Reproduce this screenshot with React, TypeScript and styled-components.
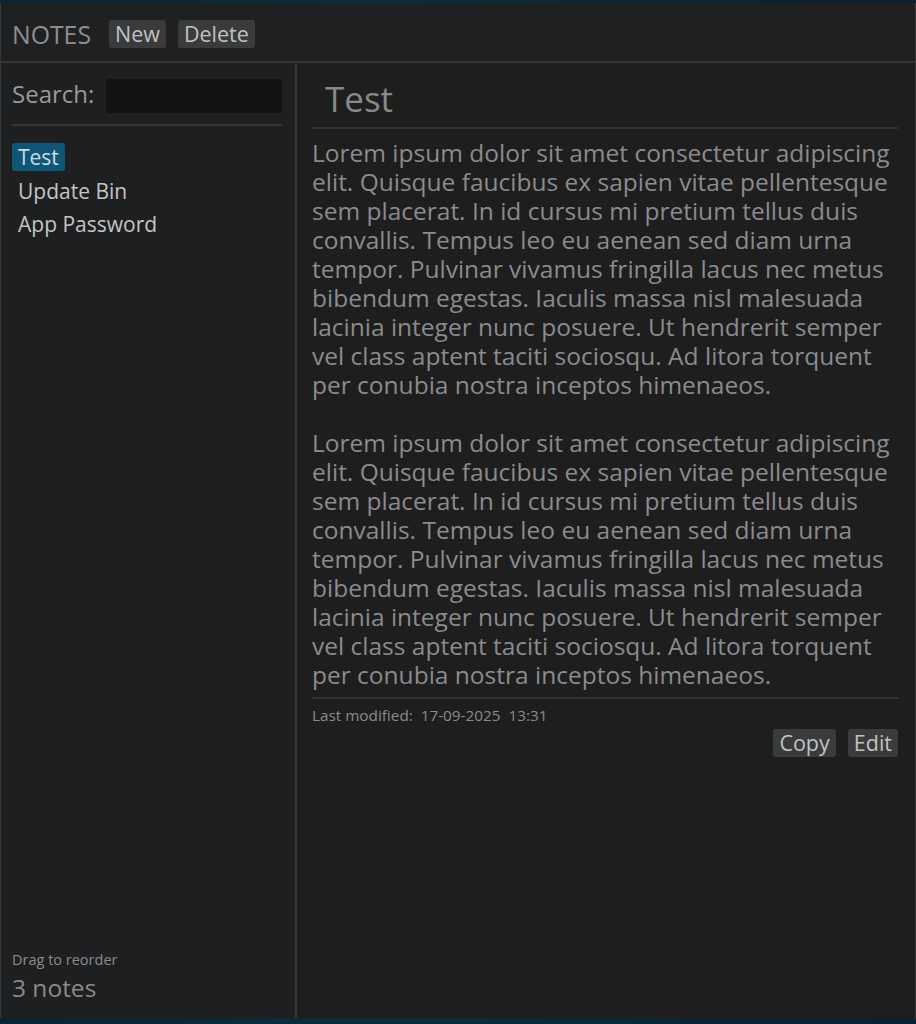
import React from "react";
import styled, { createGlobalStyle } from "styled-components";

const GlobalStyle = createGlobalStyle`
  html, body { margin: 0; padding: 0; }
  body {
    background: #0a2232;
    font-family: "Open Sans", "Noto Sans", sans-serif;
    overflow: hidden;
  }
`;

const Screen = styled.div`
  height: 1024px;
  display: flex;
  flex-direction: column;
  padding: 3px 0 6px;
  box-sizing: border-box;
  background: linear-gradient(90deg, #0b2433 0%, #0d2c3e 40%, #0a2130 100%);
`;

const Window = styled.div`
  flex: 1;
  display: flex;
  flex-direction: column;
  background: #1e1f20;
  border-left: 1px solid #38393a;
  border-right: 1px solid #38393a;
  min-height: 0;
`;

const Header = styled.header`
  height: 60px;
  box-sizing: border-box;
  display: flex;
  align-items: center;
  gap: 12px;
  padding: 4px 0 0 11px;
  border-bottom: 2px solid #343536;
  background: #1f2022;
`;

const AppTitle = styled.div`
  font-size: 24.8px;
  color: #8e8e8e;
  margin-right: 6px;
  line-height: 1;
`;

const Button = styled.button`
  height: 28px;
  padding: 0 6px;
  border: none;
  border-radius: 3px;
  background: #3a3b3c;
  color: #c2c2c2;
  font-family: inherit;
  font-size: 21.5px;
  line-height: 28px;
  cursor: pointer;
`;

const Body = styled.div`
  flex: 1;
  display: flex;
  min-height: 0;
`;

const Sidebar = styled.aside`
  width: 296px;
  flex-shrink: 0;
  box-sizing: border-box;
  border-right: 2px solid #343536;
  padding: 16px 13px 14px 11px;
  display: flex;
  flex-direction: column;
  background: #1e1f20;
`;

const SearchRow = styled.div`
  display: flex;
  align-items: flex-start;
  gap: 12px;
  padding-bottom: 11px;
  border-bottom: 2px solid #343536;
`;

const SearchLabel = styled.label`
  font-size: 24px;
  color: #9a9a9a;
  line-height: 29px;
`;

const SearchInput = styled.input`
  flex: 1;
  min-width: 0;
  height: 34px;
  box-sizing: border-box;
  border: none;
  border-radius: 3px;
  background: #111213;
  color: #ccc;
  outline: none;
`;

const NoteList = styled.ul`
  list-style: none;
  margin: 17px 0 0;
  padding: 0;
  display: flex;
  flex-direction: column;
  align-items: flex-start;
  gap: 5.5px;
`;

const NoteItem = styled.li<{ $active?: boolean }>`
  height: 28px;
  line-height: 28px;
  padding: 0 6px;
  border-radius: 3px;
  font-size: 21px;
  color: ${(p) => (p.$active ? "#c9dbe4" : "#c4c4c4")};
  background: ${(p) => (p.$active ? "#0f5676" : "transparent")};
`;

const SidebarFooter = styled.div`
  margin-top: auto;
  display: flex;
  flex-direction: column;
`;

const Hint = styled.div`
  font-size: 14.5px;
  line-height: 18px;
  margin-bottom: 3px;
  color: #8c8c8c;
`;

const Count = styled.div`
  font-size: 24.5px;
  line-height: 32px;
  color: #8a8a8a;
`;

const Main = styled.main`
  flex: 1;
  min-width: 0;
  padding: 15px 17px 0 15px;
  display: flex;
  flex-direction: column;
  background: #1e1e1f;
`;

const NoteTitle = styled.h1`
  margin: 0;
  padding: 0 13px;
  font-size: 35px;
  font-weight: 400;
  line-height: 42px;
  color: #888888;
`;

const Rule = styled.hr<{ $gap?: number }>`
  border: none;
  border-top: 2px solid #333435;
  margin: ${(p) => p.$gap ?? 7}px 0 0;
`;

const NoteText = styled.div`
  margin-top: 9px;
  font-size: 24.5px;
  line-height: 29px;
  color: #8b8b8b;
  white-space: nowrap;
`;

const Paragraph = styled.p`
  margin: 0 0 29px;
  &:last-child { margin-bottom: 0; }
`;

const Line = styled.span`
  display: block;
`;

const Meta = styled.div`
  margin-top: 7px;
  font-size: 15.3px;
  line-height: 18px;
  color: #8a8a8a;
  white-space: pre;
`;

const Actions = styled.div`
  margin-top: 5px;
  display: flex;
  justify-content: flex-end;
  gap: 12px;
`;

const lines = [
  "Lorem ipsum dolor sit amet consectetur adipiscing",
  "elit. Quisque faucibus ex sapien vitae pellentesque",
  "sem placerat. In id cursus mi pretium tellus duis",
  "convallis. Tempus leo eu aenean sed diam urna",
  "tempor. Pulvinar vivamus fringilla lacus nec metus",
  "bibendum egestas. Iaculis massa nisl malesuada",
  "lacinia integer nunc posuere. Ut hendrerit semper",
  "vel class aptent taciti sociosqu. Ad litora torquent",
  "per conubia nostra inceptos himenaeos.",
];

const notes = ["Test", "Update Bin", "App Password"];

export default function App() {
  return (
    <>
      <GlobalStyle />
      <Screen>
        <Window>
          <Header>
            <AppTitle>NOTES</AppTitle>
            <Button>New</Button>
            <Button>Delete</Button>
          </Header>
          <Body>
            <Sidebar>
              <SearchRow>
                <SearchLabel>Search:</SearchLabel>
                <SearchInput />
              </SearchRow>
              <NoteList>
                {notes.map((n, i) => (
                  <NoteItem key={n} $active={i === 0}>
                    {n}
                  </NoteItem>
                ))}
              </NoteList>
              <SidebarFooter>
                <Hint>Drag to reorder</Hint>
                <Count>3 notes</Count>
              </SidebarFooter>
            </Sidebar>
            <Main>
              <NoteTitle>Test</NoteTitle>
              <Rule $gap={7} />
              <NoteText>
                {[0, 1].map((p) => (
                  <Paragraph key={p}>
                    {lines.map((l) => (
                      <Line key={l}>{l}</Line>
                    ))}
                  </Paragraph>
                ))}
              </NoteText>
              <Rule $gap={8} />
              <Meta>{"Last modified:  17-09-2025  13:31"}</Meta>
              <Actions>
                <Button>Copy</Button>
                <Button>Edit</Button>
              </Actions>
            </Main>
          </Body>
        </Window>
      </Screen>
    </>
  );
}
